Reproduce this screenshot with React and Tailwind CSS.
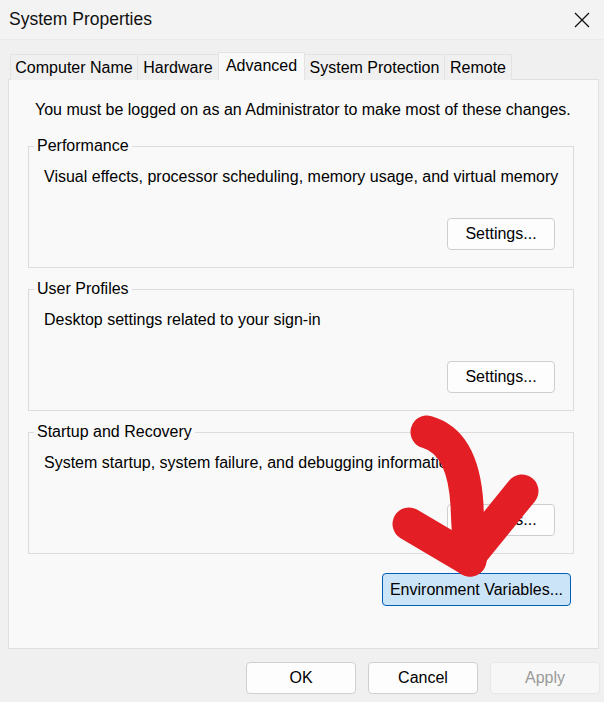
const font = { fontFamily: '"Liberation Sans", Arial, sans-serif' };

function Tab({ label, width, active }) {
  if (active) {
    return (
      <div
        className={`relative z-10 -ml-px h-[28px] ${width} border border-b-0 border-[#e3e3e3] bg-[#f9f9f9] text-center text-[16px] leading-[26px] text-black`}
      >
        {label}
      </div>
    );
  }
  return (
    <div
      className={`-ml-px h-[26px] ${width} border border-b-0 border-[#e3e3e3] bg-[#f0f0f0] text-center text-[16px] leading-[26px] text-black`}
    >
      {label}
    </div>
  );
}

function WinButton({ children, className = "" }) {
  return (
    <button
      type="button"
      className={`h-[32px] rounded-[4px] border border-[#cfcfcf] bg-[#fdfdfd] text-[16px] text-black ${className}`}
    >
      {children}
    </button>
  );
}

function GroupBox({ title, text }) {
  return (
    <div className="relative h-[122px] w-[546px] border border-[#dcdcdc]">
      <span className="absolute -top-[11px] left-[5px] bg-[#f9f9f9] px-[3px] text-[16px] leading-[20px] text-black">
        {title}
      </span>
      <div className="flex h-full flex-col pl-[15px] pr-[18px] pt-[20px]">
        <p className="whitespace-nowrap text-[16px] leading-[20px] text-black">{text}</p>
        <div className="mt-auto mb-[17px] flex justify-end">
          <WinButton className="w-[108px]">Settings...</WinButton>
        </div>
      </div>
    </div>
  );
}

export default function App() {
  return (
    <div className="relative h-[702px] w-[604px] overflow-hidden bg-[#f0f0f0]" style={font}>
      {/* title bar */}
      <div className="flex h-[40px] items-center justify-between border-b border-[#ebebeb] bg-[#f3f3f3] pl-[9px] pr-[12px]">
        <span className="text-[17.5px] text-[#111]">System Properties</span>
        <svg width="16" height="16" viewBox="0 0 16 16" className="mr-[2px]">
          <path d="M1 1 L15 15 M15 1 L1 15" stroke="#111" strokeWidth="1.3" fill="none" />
        </svg>
      </div>

      {/* tabs */}
      <div className="mt-[12px] flex items-end pl-[11px]">
        <Tab label="Computer Name" width="w-[128px]" />
        <Tab label="Hardware" width="w-[82px]" />
        <Tab label="Advanced" width="w-[87px]" active />
        <Tab label="System Protection" width="w-[141px]" />
        <Tab label="Remote" width="w-[68px]" />
      </div>

      {/* panel */}
      <div className="-mt-px ml-[8px] h-[570px] w-[591px] border border-[#e0e0e0] bg-[#f9f9f9]">
        <p className="pl-[26px] pt-[20px] text-[16px] leading-[20px] text-black">
          You must be logged on as an Administrator to make most of these changes.
        </p>
        <div className="mt-[26px] flex flex-col gap-[21px] pl-[19px]">
          <GroupBox
            title="Performance"
            text="Visual effects, processor scheduling, memory usage, and virtual memory"
          />
          <GroupBox title="User Profiles" text="Desktop settings related to your sign-in" />
          <GroupBox
            title="Startup and Recovery"
            text="System startup, system failure, and debugging information"
          />
        </div>
        <div className="mt-[19px] flex justify-end pr-[27px]">
          <button
            type="button"
            className="h-[33px] w-[189px] rounded-[4px] border border-[#005fb8] bg-[#cce4f7] text-[16px] text-black"
          >
            Environment Variables...
          </button>
        </div>
      </div>

      {/* dialog buttons */}
      <div className="mt-[13px] flex justify-end gap-[12px] pr-[4px]">
        <WinButton className="w-[110px]">OK</WinButton>
        <WinButton className="w-[110px]">Cancel</WinButton>
        <button
          type="button"
          className="h-[32px] w-[110px] rounded-[4px] border border-[#e8e8e8] bg-[#f7f7f7] text-[16px] text-[#9a9a9a]"
        >
          Apply
        </button>
      </div>

      {/* red annotation arrow */}
      <svg
        className="pointer-events-none absolute left-0 top-0"
        width="604"
        height="702"
        viewBox="0 0 604 702"
      >
        <g stroke="#e31e24" strokeWidth="33" strokeLinecap="round" strokeLinejoin="round" fill="none">
          <path d="M427 432 C 455 440, 465 470, 467 505 C 468 530, 469 545, 470 560" />
          <path d="M409 524 L 470 560" />
          <path d="M522 491 L 470 555" />
        </g>
      </svg>
    </div>
  );
}
